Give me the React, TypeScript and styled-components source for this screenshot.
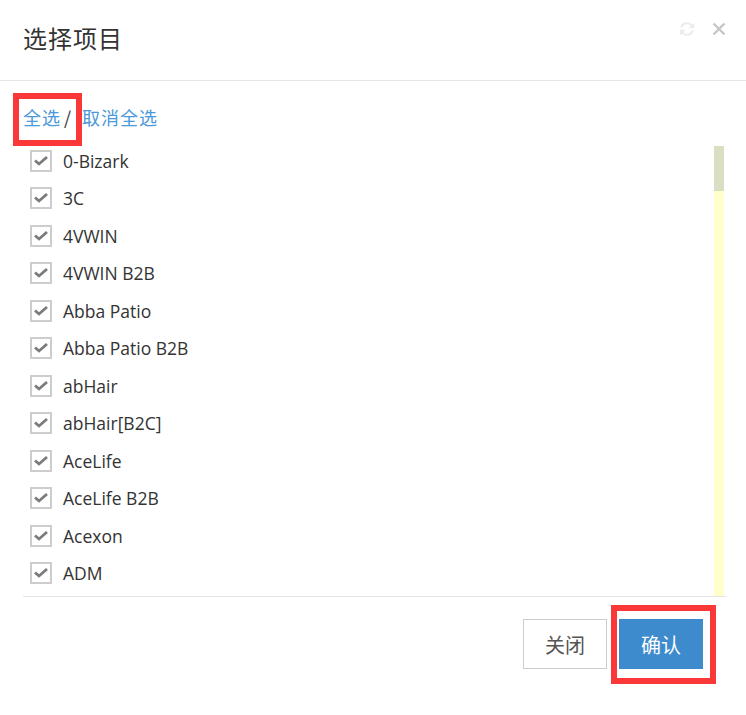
import React from "react";
import styled, { createGlobalStyle } from "styled-components";

const items = [
  "0-Bizark",
  "3C",
  "4VWIN",
  "4VWIN B2B",
  "Abba Patio",
  "Abba Patio B2B",
  "abHair",
  "abHair[B2C]",
  "AceLife",
  "AceLife B2B",
  "Acexon",
  "ADM",
];

const GlobalStyle = createGlobalStyle`
  html, body {
    margin: 0;
    padding: 0;
    background: #fff;
  }
  * {
    box-sizing: border-box;
  }
`;

const cjk = `"Noto Sans CJK SC", "Noto Sans", sans-serif`;

export default function App() {
  return (
    <>
      <GlobalStyle />
      <Dialog>
        <Header>
          <Title>选择项目</Title>
          <Tools>
            <IconButton aria-label="refresh" $tone="#ececec">
              <svg width="20" height="18" viewBox="0 0 20 18" fill="currentColor">
                <path d="M10 2.2a6.8 6.8 0 0 1 5.2 2.4L17.2 2.6V8.2H11.6l2.1-2.1A4.7 4.7 0 0 0 5.4 7.4H3.2A6.9 6.9 0 0 1 10 2.2z" />
                <path d="M10 15.8a6.8 6.8 0 0 1-5.2-2.4L2.8 15.4V9.8h5.6l-2.1 2.1a4.7 4.7 0 0 0 8.3-1.3h2.2A6.9 6.9 0 0 1 10 15.8z" />
              </svg>
            </IconButton>
            <IconButton aria-label="close" $tone="#c6c6c6">
              <svg width="14" height="14" viewBox="0 0 14 14" fill="none" stroke="currentColor" strokeWidth="2.4">
                <path d="M1.5 1.5l11 11M12.5 1.5l-11 11" />
              </svg>
            </IconButton>
          </Tools>
        </Header>

        <Body>
          <SelectLine>
            <Marked $box="-12px 0 -17px -10px">
              <LinkText>全选</LinkText>
              <Slash>/</Slash>
            </Marked>
            <LinkText>取消全选</LinkText>
          </SelectLine>

          <ListBox>
            <List>
              {items.map((name) => (
                <Row key={name}>
                  <CheckBox />
                  <Label>{name}</Label>
                </Row>
              ))}
            </List>
            <ScrollTrack>
              <ScrollThumb />
            </ScrollTrack>
          </ListBox>
        </Body>

        <Footer>
          <Button>关闭</Button>
          <Marked $box="-14px -13px -15px -8px">
            <Button $primary>确认</Button>
          </Marked>
        </Footer>
      </Dialog>
    </>
  );
}

function CheckBox() {
  return (
    <svg width="22" height="22" viewBox="0 0 22 22">
      <rect x="1" y="1" width="20" height="20" fill="#fff" stroke="#cdcdcd" strokeWidth="2" />
      <path d="M5 10.5l4 3.5 8-7" fill="none" stroke="#7b7b7b" strokeWidth="2.8" />
    </svg>
  );
}

const Dialog = styled.div`
  width: 746px;
  height: 715px;
  background: #fff;
  display: flex;
  flex-direction: column;
`;

const Header = styled.div`
  height: 81px;
  padding: 0 20px 0 23px;
  display: flex;
  justify-content: space-between;
  align-items: center;
  border-bottom: 1px solid #e6e6e6;
`;

const Title = styled.h4`
  margin: 0 0 5px;
  font-family: ${cjk};
  font-size: 24px;
  font-weight: 400;
  line-height: 32px;
  letter-spacing: 1px;
  color: #333;
`;

const Tools = styled.div`
  align-self: flex-start;
  margin-top: 20px;
  display: flex;
  align-items: center;
  gap: 15px;
`;

const IconButton = styled.span<{ $tone: string }>`
  display: inline-flex;
  color: ${(p) => p.$tone};
`;

const Body = styled.div`
  padding: 0 20px 0 23px;
`;

const SelectLine = styled.div`
  margin-top: 24px;
  height: 24px;
  display: flex;
  align-items: center;
  font-family: ${cjk};
  font-size: 18px;
  line-height: 24px;
  letter-spacing: 1px;
  color: #333;
`;

const Marked = styled.span<{ $box: string }>`
  position: relative;
  display: inline-flex;
  align-items: center;

  &::after {
    content: "";
    position: absolute;
    inset: ${(p) => p.$box};
    border: 6px solid #fb3838;
    pointer-events: none;
  }
`;

const Slash = styled.span`
  margin: 0 10px 0 3px;
  color: #333;
`;

const LinkText = styled.a`
  color: #4b98da;
  cursor: pointer;
`;

const ListBox = styled.div`
  margin-top: 13px;
  height: 455px;
  display: flex;
  border-bottom: 1px solid #e3e3e3;
  overflow: hidden;
`;

const List = styled.div`
  flex: 1;
  padding-left: 7px;
`;

const Row = styled.label`
  height: 37.5px;
  display: flex;
  align-items: center;
  gap: 11px;
`;

const Label = styled.span`
  font-family: "Open Sans", "Noto Sans", sans-serif;
  font-size: 17.5px;
  color: #333;
`;

const ScrollTrack = styled.div`
  width: 10px;
  margin: 4px 2px 0 0;
  background: #ffffcc;
`;

const ScrollThumb = styled.div`
  height: 45px;
  background: #d9dfc3;
`;

const Footer = styled.div`
  padding: 22px 43px 0 0;
  display: flex;
  justify-content: flex-end;
  gap: 12px;
`;

const Button = styled.button<{ $primary?: boolean }>`
  height: 50px;
  padding: 0 21px;
  font-family: ${cjk};
  font-size: 20px;
  border: 1px solid ${(p) => (p.$primary ? "#3d8bcd" : "#cccccc")};
  background: ${(p) => (p.$primary ? "#3d8bcd" : "#fff")};
  color: ${(p) => (p.$primary ? "#fff" : "#555")};
  cursor: pointer;
`;
